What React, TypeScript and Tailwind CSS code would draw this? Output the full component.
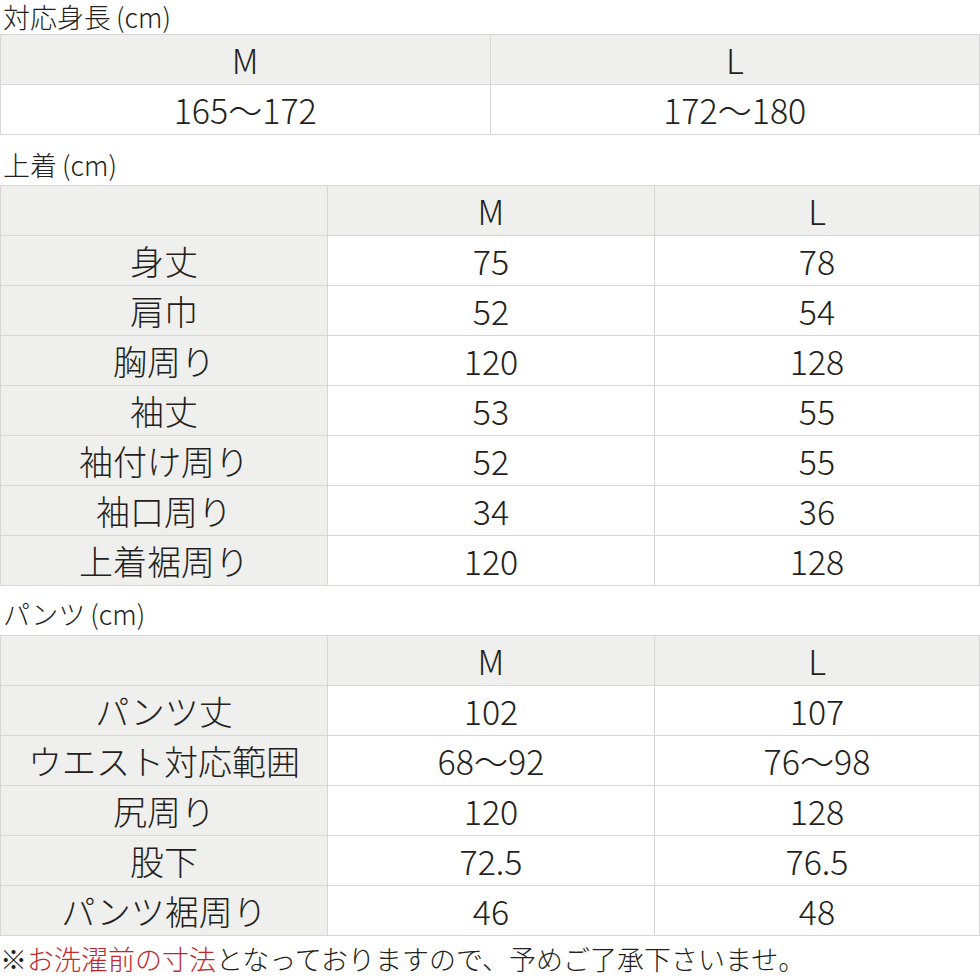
import React from "react";

const font = { fontFamily: '"Noto Sans CJK JP", "Noto Sans", sans-serif' };

function Title({ label, className }: { label: string; className: string }) {
  return (
    <div className={`text-[27px] font-light text-[#231f20] pl-[3px] ${className}`}>
      {label}
      <span className="ml-[5px]">(cm)</span>
    </div>
  );
}

function Cell({ children, gray }: { children?: React.ReactNode; gray?: boolean }) {
  return (
    <td
      className={`border border-[#d6d6d6] h-[50px] p-0 text-center align-middle text-[34px] font-light leading-none text-[#231f20] ${
        gray ? "bg-[#efefee]" : "bg-white"
      }`}
    >
      {children}
    </td>
  );
}

function SizeTable({ rows }: { rows: [string, string, string][] }) {
  return (
    <table className="w-full border-collapse table-fixed">
      <colgroup>
        <col className="w-[327px]" />
        <col className="w-[327px]" />
        <col />
      </colgroup>
      <tbody>
        <tr>
          <Cell gray />
          <Cell gray>M</Cell>
          <Cell gray>L</Cell>
        </tr>
        {rows.map((r) => (
          <tr key={r[0]}>
            <Cell gray>{r[0]}</Cell>
            <Cell>{r[1]}</Cell>
            <Cell>{r[2]}</Cell>
          </tr>
        ))}
      </tbody>
    </table>
  );
}

export default function App() {
  return (
    <div className="w-[980px] h-[980px] bg-white overflow-hidden" style={font}>
      <Title label="対応身長" className="h-[34px] leading-[34px]" />
      <table className="w-full border-collapse table-fixed">
        <tbody>
          <tr>
            <Cell gray>M</Cell>
            <Cell gray>L</Cell>
          </tr>
          <tr>
            <Cell>165〜172</Cell>
            <Cell>172〜180</Cell>
          </tr>
        </tbody>
      </table>
      <Title label="上着" className="h-[50px] leading-[60px]" />
      <SizeTable
        rows={[
          ["身丈", "75", "78"],
          ["肩巾", "52", "54"],
          ["胸周り", "120", "128"],
          ["袖丈", "53", "55"],
          ["袖付け周り", "52", "55"],
          ["袖口周り", "34", "36"],
          ["上着裾周り", "120", "128"],
        ]}
      />
      <Title label="パンツ" className="h-[49px] leading-[56px]" />
      <SizeTable
        rows={[
          ["パンツ丈", "102", "107"],
          ["ウエスト対応範囲", "68〜92", "76〜98"],
          ["尻周り", "120", "128"],
          ["股下", "72.5", "76.5"],
          ["パンツ裾周り", "46", "48"],
        ]}
      />
      <div className="text-[27px] font-light leading-[40px] text-[#231f20] pt-[3px]">
        ※<span className="text-[#c1272d]">お洗濯前の寸法</span>となっておりますので、予めご了承下さいませ。
      </div>
    </div>
  );
}
